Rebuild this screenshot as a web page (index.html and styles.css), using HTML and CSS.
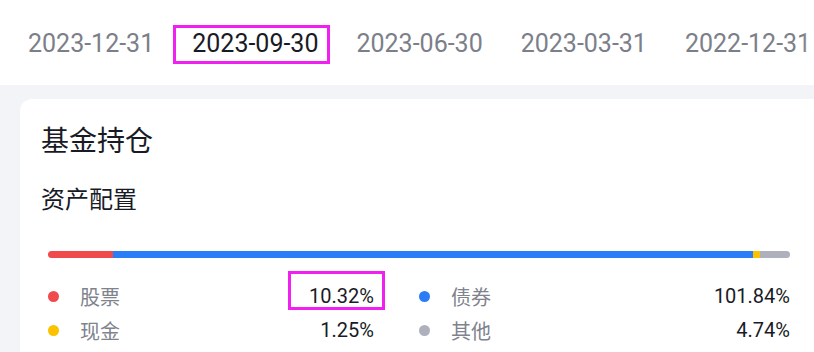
FILE: index.html
```html
<!DOCTYPE html>
<html lang="zh">
<head>
<meta charset="utf-8">
<link rel="stylesheet" href="styles.css">
</head>
<body>
<div class="tabs">
  <span class="tab">2023-12-31</span>
  <span class="tab active">2023-09-30</span>
  <span class="tab">2023-06-30</span>
  <span class="tab">2023-03-31</span>
  <span class="tab">2022-12-31</span>
  <div class="fade"></div>
</div>
<div class="page">
  <div class="card">
    <h1 class="title">基金持仓</h1>
    <h2 class="subtitle">资产配置</h2>
    <div class="bar">
      <span class="seg red" style="width:65px"></span>
      <span class="seg blue" style="width:640px"></span>
      <span class="seg yellow" style="width:7px"></span>
      <span class="seg gray" style="flex:1"></span>
    </div>
    <div class="legend">
      <div class="item"><span class="dot red"></span><span class="label">股票</span><span class="value marked">10.32%</span></div>
      <div class="item"><span class="dot blue"></span><span class="label">债券</span><span class="value">101.84%</span></div>
      <div class="item"><span class="dot yellow"></span><span class="label">现金</span><span class="value">1.25%</span></div>
      <div class="item"><span class="dot gray"></span><span class="label">其他</span><span class="value">4.74%</span></div>
    </div>
  </div>
</div>
</body>
</html>
```

FILE: styles.css
```css
* { box-sizing: border-box; }
html, body { margin: 0; padding: 0; }
body {
  width: 814px;
  height: 352px;
  overflow: hidden;
  background: #f3f4f8;
  font-family: Roboto, "Noto Sans CJK SC", sans-serif;
}
.tabs {
  position: relative;
  height: 85px;
  background: #fff;
  display: flex;
  align-items: center;
  gap: 38px;
  padding-left: 28px;
  padding-top: 2px;
  white-space: nowrap;
  overflow: hidden;
}
.tab {
  position: relative;
  flex: none;
  font-size: 25px;
  line-height: 30px;
  color: #7c7f89;
}
.tab.active { color: #181b25; }
.tab.active::after {
  content: "";
  position: absolute;
  top: -4px;
  bottom: -5px;
  left: -19px;
  right: -12px;
  border: 3px solid #f020f0;
}
.fade {
  position: absolute;
  right: 0;
  top: 0;
  bottom: 0;
  width: 10px;
  background: linear-gradient(to right, rgba(255,255,255,0), #fff);
}
.page {
  padding: 14px 0 0 20px;
}
.card {
  background: #fff;
  border-radius: 12px 0 0 0;
  height: 260px;
  padding: 23px 24px 0 28px;
}
.title {
  margin: 0 0 0 -7px;
  font-size: 28px;
  line-height: 40px;
  font-weight: 400;
  color: #181b25;
}
.subtitle {
  margin: 21px 0 0 -7px;
  font-size: 24px;
  line-height: 34px;
  font-weight: 400;
  color: #181b25;
}
.bar {
  display: flex;
  height: 7px;
  margin-top: 34px;
  border-radius: 4px;
  overflow: hidden;
}
.seg { display: block; height: 100%; flex: none; }
.red { background: #ef4b4c; }
.blue { background: #2a7df6; }
.yellow { background: #fcc200; }
.gray { background: #aeb0bc; }
.legend {
  display: grid;
  grid-template-columns: 326px 1fr;
  column-gap: 45px;
  margin-top: 21px;
}
.item {
  display: flex;
  align-items: center;
  height: 34px;
}
.dot {
  width: 11px;
  height: 11px;
  border-radius: 50%;
  margin-right: 21px;
  flex: none;
}
.label {
  font-size: 20px;
  color: #80838d;
  flex: 1;
}
.value {
  position: relative;
  font-size: 20px;
  color: #181b25;
}
.value.marked::after {
  content: "";
  position: absolute;
  top: -13px;
  bottom: -2px;
  left: -21px;
  right: -11px;
  border: 3px solid #f020f0;
}
```
